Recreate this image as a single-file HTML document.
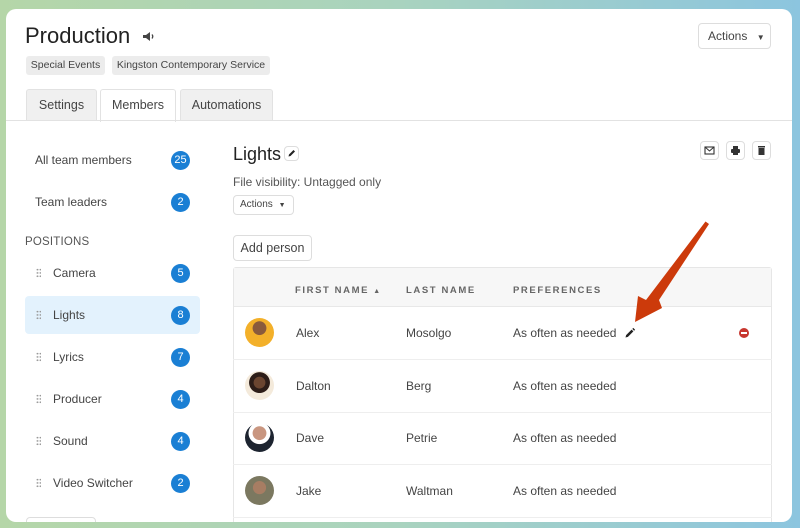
<!DOCTYPE html>
<html><head><style>
*{box-sizing:border-box;margin:0;padding:0}
body{width:800px;height:528px;overflow:hidden;font-family:"Liberation Sans",sans-serif;background:linear-gradient(90deg,#b5d6a8 0%,#a9d3bf 50%,#8cc5df 100%);position:relative;color:#333}
.card{position:absolute;left:6px;top:9px;width:786px;height:513px;background:#fff;border-radius:10px;overflow:hidden}
.abs{position:absolute}
.tag{position:absolute;top:47px;height:19px;background:#ececec;border-radius:3px;font-size:10.5px;color:#444;line-height:19px;text-align:center}
.tab{position:absolute;top:80px;height:32px;background:#f0f0f0;border:1px solid #e2e2e2;border-bottom:none;border-radius:3px 3px 0 0;font-size:12.5px;color:#444;line-height:31px;text-align:center}
.btn{position:absolute;border:1px solid #ddd;border-radius:4px;background:#fff;color:#444}
.side{position:absolute;left:19px;width:175px;height:38px;font-size:12px;color:#444;line-height:38px;border-radius:4px}
.side .n{position:absolute;right:10px;top:10px;width:19px;height:19px;border-radius:50%;background:#1a7fd4;color:#fff;font-size:11px;line-height:19px;text-align:center}
.dots{position:absolute;left:11px;top:14px;width:5px;height:10px;background-image:radial-gradient(circle,#999 0.8px,transparent 1px);background-size:3px 3.3px}
.row{position:absolute;left:227px;width:539px;height:53px;border-bottom:1px solid #eee;font-size:12px;color:#444}
.row span{position:absolute;top:19px}
.av{position:absolute;left:12px;top:11px;width:29px;height:29px;border-radius:50%}
.hd{position:absolute;top:17px;font-size:9.5px;letter-spacing:1.6px;color:#666;font-weight:bold}
</style></head><body>
<div class="card">
<div class="abs" style="left:19px;top:14px;font-size:22px;color:#222">Production</div>
<svg class="abs" style="left:136px;top:22px" width="13" height="11" viewBox="0 0 13 11"><path d="M1 4h3l4-3v9L4 7H1z" fill="#444"/><path d="M10 3.5q1.5 2 0 4" stroke="#444" stroke-width="1.3" fill="none"/></svg>
<div class="tag" style="left:20px;width:79px">Special Events</div>
<div class="tag" style="left:106px;width:158px">Kingston Contemporary Service</div>
<div class="btn" style="left:692px;top:14px;width:73px;height:26px;font-size:12px;line-height:24px;padding-left:9px">Actions <span style="font-size:8px;margin-left:6px">▼</span></div>
<div class="tab" style="left:20px;width:71px">Settings</div>
<div class="tab" style="left:94px;width:76px;background:#fff;height:33px">Members</div>
<div class="tab" style="left:174px;width:93px">Automations</div>
<div class="abs" style="left:0;top:111px;width:786px;height:1px;background:#e2e2e2"></div>
<div class="side" style="top:132px;padding-left:10px">All team members<div class="n">25</div></div>
<div class="side" style="top:174px;padding-left:10px">Team leaders<div class="n">2</div></div>
<div class="abs" style="left:19px;top:227px;font-size:11.5px;color:#555;letter-spacing:.2px">POSITIONS</div>
<div class="side" style="top:245px;padding-left:28px"><i class="dots"></i>Camera<div class="n">5</div></div>
<div class="side" style="top:287px;padding-left:28px;background:#e3f2fd"><i class="dots"></i>Lights<div class="n">8</div></div>
<div class="side" style="top:329px;padding-left:28px"><i class="dots"></i>Lyrics<div class="n">7</div></div>
<div class="side" style="top:371px;padding-left:28px"><i class="dots"></i>Producer<div class="n">4</div></div>
<div class="side" style="top:413px;padding-left:28px"><i class="dots"></i>Sound<div class="n">4</div></div>
<div class="side" style="top:455px;padding-left:28px"><i class="dots"></i>Video Switcher<div class="n">2</div></div>
<div class="btn" style="left:20px;top:508px;width:70px;height:20px"></div>
<div class="abs" style="left:227px;top:135px;font-size:18px;color:#222">Lights</div>
<div class="btn" style="left:278px;top:137px;width:15px;height:15px"><svg width="13" height="13" viewBox="0 0 13 13"><path d="M3.5 9.5l0.5-2 4.5-4.5 1.5 1.5-4.5 4.5z" fill="#222"/></svg></div>
<div class="btn" style="left:694px;top:132px;width:19px;height:19px"><svg width="17" height="17" viewBox="0 0 17 17"><rect x="4" y="5" width="9" height="7" fill="none" stroke="#333" stroke-width="1.1"/><path d="M4 5l4.5 4 4.5-4" fill="none" stroke="#333" stroke-width="1"/></svg></div>
<div class="btn" style="left:720px;top:132px;width:19px;height:19px"><svg width="17" height="17" viewBox="0 0 17 17"><rect x="6" y="4" width="5" height="3" fill="#333"/><rect x="4" y="7" width="9" height="4" rx="1" fill="#333"/><rect x="6" y="10" width="5" height="3" fill="#333"/></svg></div>
<div class="btn" style="left:746px;top:132px;width:19px;height:19px"><svg width="17" height="17" viewBox="0 0 17 17"><rect x="5" y="4" width="7" height="1.5" fill="#333"/><rect x="5.5" y="6" width="6" height="7" fill="#333"/></svg></div>
<div class="abs" style="left:227px;top:166px;font-size:12px;color:#555">File visibility: Untagged only</div>
<div class="btn" style="left:227px;top:186px;width:61px;height:20px;font-size:10px;line-height:18px;padding-left:6px">Actions <span style="font-size:7px;margin-left:3px">▼</span></div>
<div class="btn" style="left:227px;top:226px;width:79px;height:26px;font-size:12.5px;line-height:24px;text-align:center">Add person</div>
<div class="abs" style="left:227px;top:258px;width:539px;height:270px;border:1px solid #e6e6e6;border-radius:3px"></div>
<div class="abs" style="left:228px;top:259px;width:537px;height:39px;background:#f7f7f7;border-bottom:1px solid #e8e8e8">
<div class="hd" style="left:61px">FIRST NAME <span style="font-size:7px">▲</span></div>
<div class="hd" style="left:172px">LAST NAME</div>
<div class="hd" style="left:279px">PREFERENCES</div>
</div>
<div class="row" style="top:298px"><div class="av" style="background:radial-gradient(circle at 50% 35%,#8a5a3c 0 28%,#f3b02a 30%)"></div><span style="left:63px">Alex</span><span style="left:173px">Mosolgo</span><span style="left:280px">As often as needed</span><svg class="abs" style="left:391px;top:20px" width="12" height="12" viewBox="0 0 12 12"><path d="M1.5 10.5l0.6-2.4 5.5-5.5 1.8 1.8-5.5 5.5z M8.3 1.9l1-1 1.8 1.8-1 1z" fill="#222"/></svg><div class="abs" style="left:506px;top:21px;width:10px;height:10px;border-radius:50%;background:#c7362e"><div style="margin:4px 2px;height:2px;background:#fff"></div></div></div>
<div class="row" style="top:351px"><div class="av" style="background:radial-gradient(circle at 50% 40%,#6b4530 0 25%,#2d1d18 27% 45%,#f4eadb 47%)"></div><span style="left:63px">Dalton</span><span style="left:173px">Berg</span><span style="left:280px">As often as needed</span></div>
<div class="row" style="top:403px"><div class="av" style="background:radial-gradient(circle at 50% 35%,#c99680 0 28%,#fff 30% 45%,#1d2430 47%)"></div><span style="left:63px">Dave</span><span style="left:173px">Petrie</span><span style="left:280px">As often as needed</span></div>
<div class="row" style="top:456px"><div class="av" style="background:radial-gradient(circle at 50% 40%,#a77d63 0 28%,#7b7860 30%)"></div><span style="left:63px">Jake</span><span style="left:173px">Waltman</span><span style="left:280px">As often as needed</span></div>
</div>
<svg class="abs" style="left:0;top:0" width="800" height="528"><path d="M705.5 221.5L709 224L659 300L662 308L635 322L638 296L646 300Z" fill="#cc3a0b"/></svg>
</body></html>
